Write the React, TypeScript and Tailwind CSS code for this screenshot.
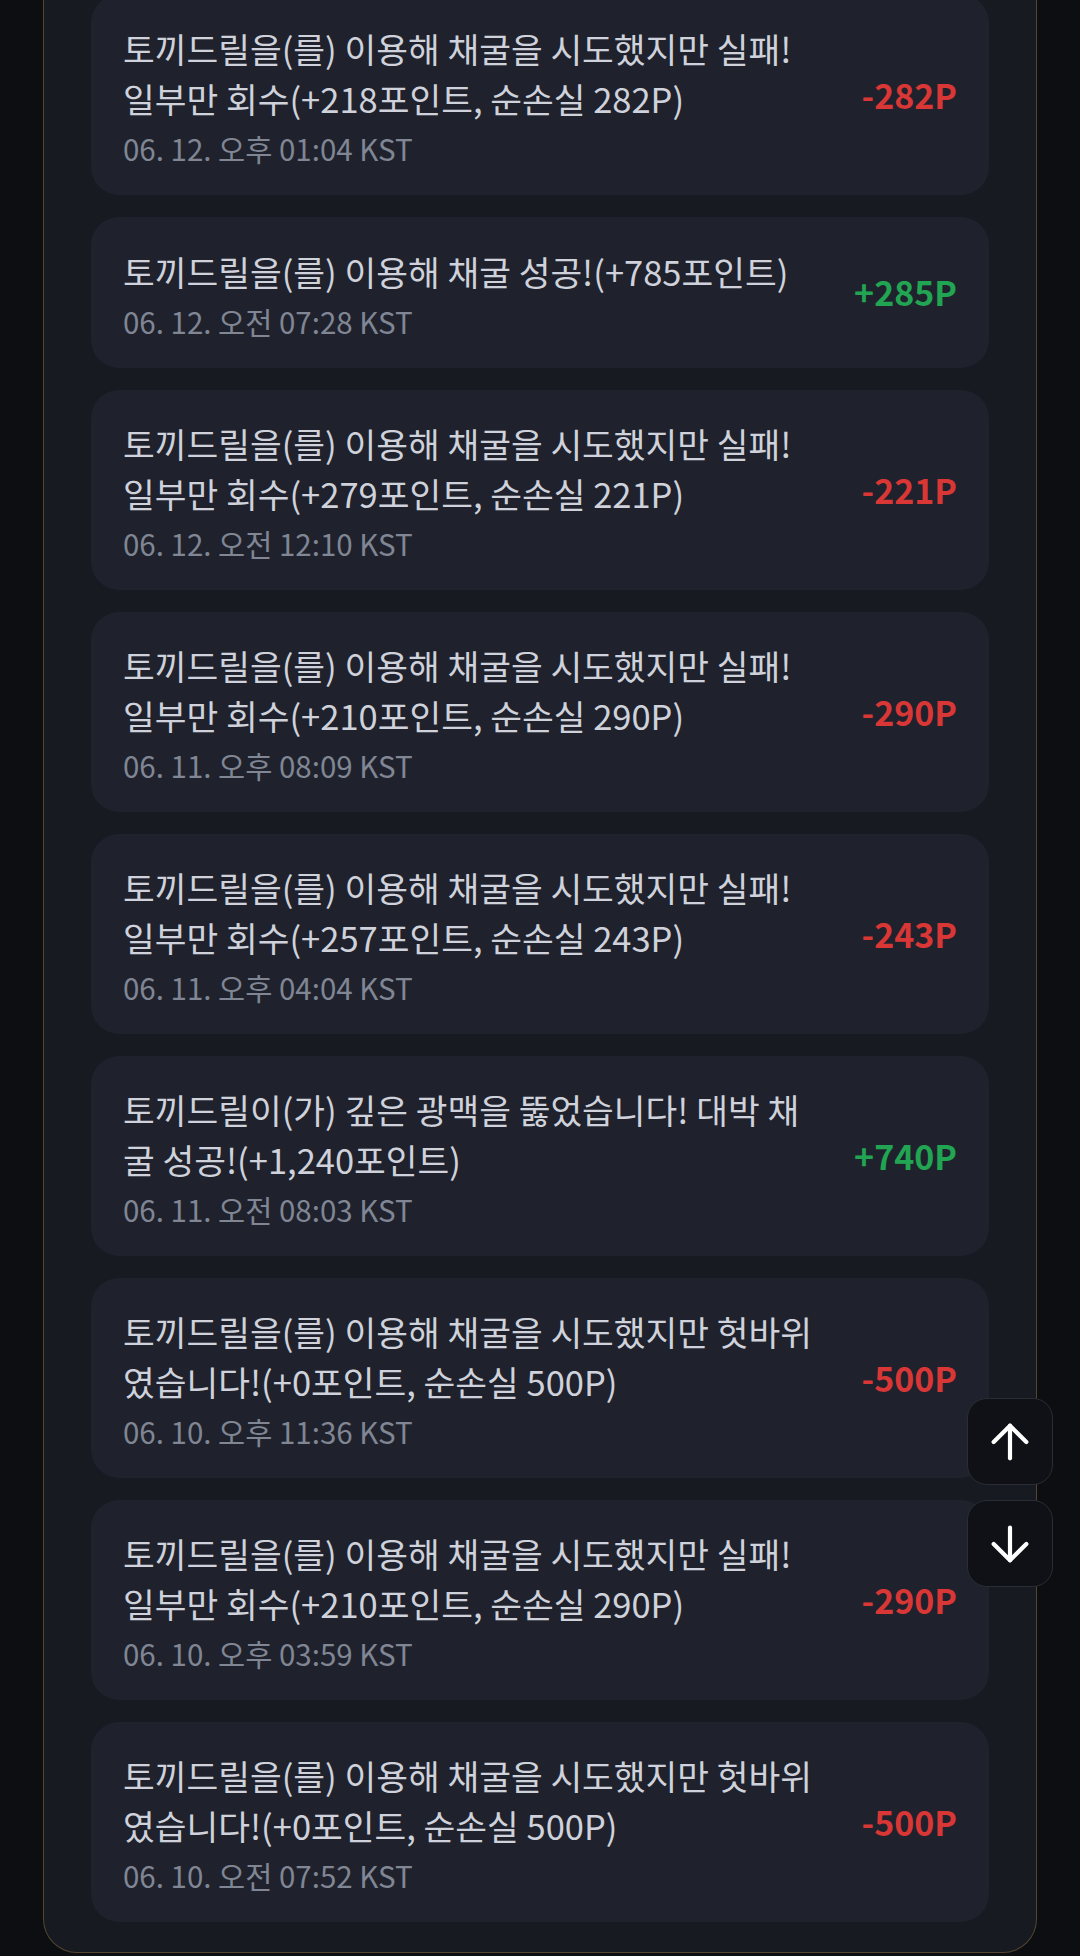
import React from "react";

type Item = { title: string; date: string; amount: string; positive: boolean };

const items: Item[] = [
  { title: "토끼드릴을(를) 이용해 채굴을 시도했지만 실패! 일부만 회수(+218포인트, 순손실 282P)", date: "06. 12. 오후 01:04 KST", amount: "-282P", positive: false },
  { title: "토끼드릴을(를) 이용해 채굴 성공!(+785포인트)", date: "06. 12. 오전 07:28 KST", amount: "+285P", positive: true },
  { title: "토끼드릴을(를) 이용해 채굴을 시도했지만 실패! 일부만 회수(+279포인트, 순손실 221P)", date: "06. 12. 오전 12:10 KST", amount: "-221P", positive: false },
  { title: "토끼드릴을(를) 이용해 채굴을 시도했지만 실패! 일부만 회수(+210포인트, 순손실 290P)", date: "06. 11. 오후 08:09 KST", amount: "-290P", positive: false },
  { title: "토끼드릴을(를) 이용해 채굴을 시도했지만 실패! 일부만 회수(+257포인트, 순손실 243P)", date: "06. 11. 오후 04:04 KST", amount: "-243P", positive: false },
  { title: "토끼드릴이(가) 깊은 광맥을 뚫었습니다! 대박 채굴 성공!(+1,240포인트)", date: "06. 11. 오전 08:03 KST", amount: "+740P", positive: true },
  { title: "토끼드릴을(를) 이용해 채굴을 시도했지만 헛바위였습니다!(+0포인트, 순손실 500P)", date: "06. 10. 오후 11:36 KST", amount: "-500P", positive: false },
  { title: "토끼드릴을(를) 이용해 채굴을 시도했지만 실패! 일부만 회수(+210포인트, 순손실 290P)", date: "06. 10. 오후 03:59 KST", amount: "-290P", positive: false },
  { title: "토끼드릴을(를) 이용해 채굴을 시도했지만 헛바위였습니다!(+0포인트, 순손실 500P)", date: "06. 10. 오전 07:52 KST", amount: "-500P", positive: false },
];

function Arrow({ down }: { down?: boolean }) {
  return (
    <svg width="56" height="56" viewBox="0 0 24 24" fill="none" stroke="#ffffff" strokeWidth="1.8" strokeLinecap="round" strokeLinejoin="round">
      {down ? (
        <>
          <path d="M12 5v14" />
          <path d="m19 12-7 7-7-7" />
        </>
      ) : (
        <>
          <path d="m5 12 7-7 7 7" />
          <path d="M12 19V5" />
        </>
      )}
    </svg>
  );
}

export default function App() {
  return (
    <div
      className="relative h-[1956px] w-[1080px] overflow-hidden bg-[#0c0e12]"
      style={{ fontFamily: '"Noto Sans CJK KR", "Noto Sans", sans-serif' }}
    >
      <div className="mx-[43px] -mt-[5px] flex flex-col gap-[22px] rounded-b-[34px] border-x border-b border-[#54462f] bg-[#171a21] px-[47px] pb-[30px]">
        {items.map((it, i) => (
          <div key={i} className="flex min-h-[151px] items-center rounded-[28px] bg-[#1f222d] px-[32px] pt-[28px] pb-[29px]">
            <div className="min-w-0 flex-1">
              <div className="text-[34.5px] leading-[50px] text-[#cfd2db]">{it.title}</div>
              <div className="mt-[7px] text-[29.5px] leading-[36px] text-[#808694]">{it.date}</div>
            </div>
            <div
              className={
                "ml-[32px] shrink-0 text-[34px] font-bold leading-[50px] " +
                (it.positive ? "text-[#22a552]" : "text-[#d93636]")
              }
            >
              {it.amount}
            </div>
          </div>
        ))}
      </div>

      <div className="absolute right-[27px] top-[1398px] flex h-[87px] w-[86px] items-center justify-center rounded-[20px] border border-[#2a2d34] bg-[#0f1116]">
        <Arrow />
      </div>
      <div className="absolute right-[27px] top-[1500px] flex h-[87px] w-[86px] items-center justify-center rounded-[20px] border border-[#2a2d34] bg-[#0f1116]">
        <Arrow down />
      </div>
    </div>
  );
}
